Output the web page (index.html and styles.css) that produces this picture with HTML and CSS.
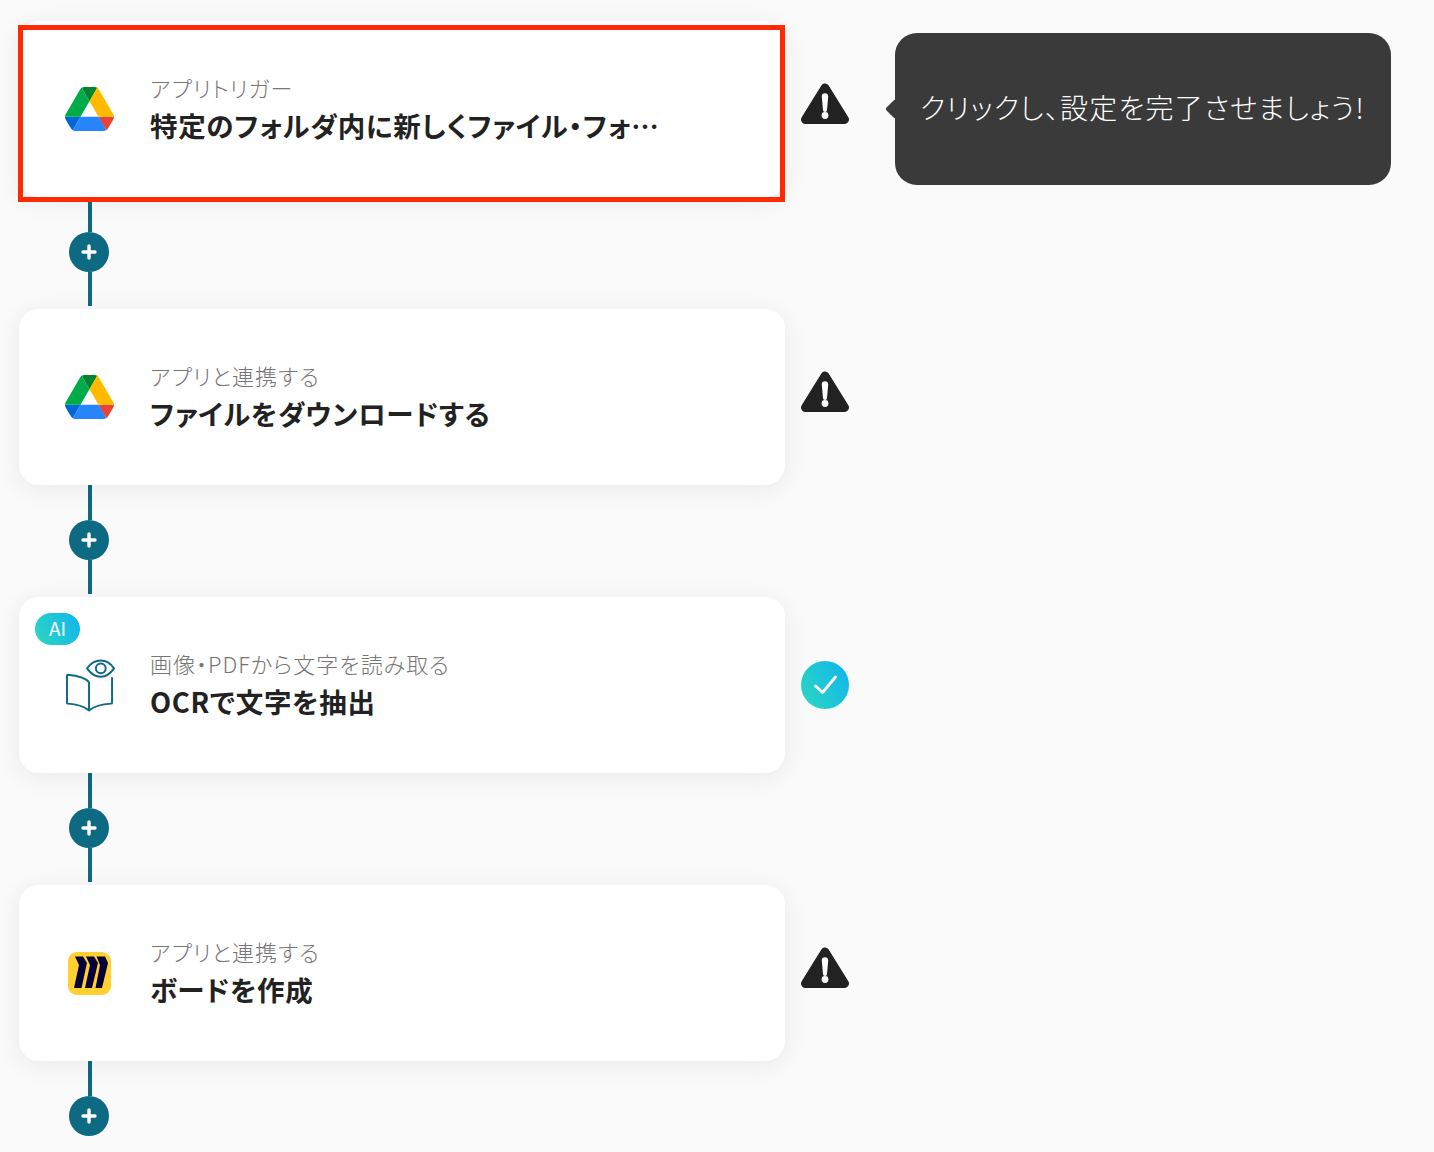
FILE: index.html
```html
<!DOCTYPE html>
<html lang="ja">
  <head>
    <title>フロー</title>
    <link rel="stylesheet" href="styles.css">
  </head>
  <body>
    <div class="flow">

      <div class="step">
        <div class="card">
          <div class="selected-frame"></div>
          <svg class="icon icon-drive" viewBox="0 0 87.3 78">
            <path d="m6.6 66.85 3.85 6.65c.8 1.4 1.95 2.5 3.3 3.3l13.75-23.8h-27.5c0 1.55.4 3.1 1.2 4.5z" fill="#0066da"/>
            <path d="m43.65 25-13.75-23.8c-1.35.8-2.5 1.9-3.3 3.3l-25.4 44a9.06 9.06 0 0 0 -1.2 4.5h27.5z" fill="#00ac47"/>
            <path d="m73.55 76.8c1.35-.8 2.5-1.9 3.3-3.3l1.6-2.75 7.65-13.25c.8-1.4 1.2-2.95 1.2-4.5h-27.502l5.852 11.5z" fill="#ea4335"/>
            <path d="m43.65 25 13.75-23.8c-1.35-.8-2.9-1.2-4.5-1.2h-18.5c-1.6 0-3.15.45-4.5 1.2z" fill="#00832d"/>
            <path d="m59.8 53h-32.3l-13.75 23.8c1.35.8 2.9 1.2 4.5 1.2h50.8c1.6 0 3.15-.45 4.5-1.2z" fill="#2684fc"/>
            <path d="m73.4 26.5-12.7-22c-.8-1.4-1.95-2.5-3.3-3.3l-13.75 23.8 16.15 28h27.45c0-1.55-.4-3.1-1.2-4.5z" fill="#ffba00"/>
          </svg>
          <div class="card-text">
            <div class="card-label">アプリトリガー</div>
            <div class="card-title">特定のフォルダ内に新しくファイル・フォルダが作成されたら</div>
          </div>
        </div>
        <svg class="warning" viewBox="0 0 48 44">
          <path class="warning-bg" d="M24 6 43.500 37.500H4.500Z"/>
          <path class="warning-mark" d="M20.800 14.500a3.200 3.200 0 0 1 6.400 0l-1.200 13.500a2 2 0 0 1-4 0Z"/>
          <circle class="warning-mark" cx="24" cy="33.500" r="3.400"/>
        </svg>
        <div class="tooltip">クリックし、設定を完了させましょう!</div>
      </div>

      <div class="connector">
        <div class="line"></div>
        <div class="add"><svg viewBox="0 0 16 16"><path d="M8 2v12M2 8h12"/></svg></div>
        <div class="line"></div>
      </div>

      <div class="step">
        <div class="card">
          <svg class="icon icon-drive" viewBox="0 0 87.3 78">
            <path d="m6.6 66.85 3.85 6.65c.8 1.4 1.95 2.5 3.3 3.3l13.75-23.8h-27.5c0 1.55.4 3.1 1.2 4.5z" fill="#0066da"/>
            <path d="m43.65 25-13.75-23.8c-1.35.8-2.5 1.9-3.3 3.3l-25.4 44a9.06 9.06 0 0 0 -1.2 4.5h27.5z" fill="#00ac47"/>
            <path d="m73.55 76.8c1.35-.8 2.5-1.9 3.3-3.3l1.6-2.75 7.65-13.25c.8-1.4 1.2-2.95 1.2-4.5h-27.502l5.852 11.5z" fill="#ea4335"/>
            <path d="m43.65 25 13.75-23.8c-1.35-.8-2.9-1.2-4.5-1.2h-18.5c-1.6 0-3.15.45-4.5 1.2z" fill="#00832d"/>
            <path d="m59.8 53h-32.3l-13.75 23.8c1.35.8 2.9 1.2 4.5 1.2h50.8c1.6 0 3.15-.45 4.5-1.2z" fill="#2684fc"/>
            <path d="m73.4 26.5-12.7-22c-.8-1.4-1.95-2.5-3.3-3.3l-13.75 23.8 16.15 28h27.45c0-1.55-.4-3.1-1.2-4.5z" fill="#ffba00"/>
          </svg>
          <div class="card-text">
            <div class="card-label">アプリと連携する</div>
            <div class="card-title">ファイルをダウンロードする</div>
          </div>
        </div>
        <svg class="warning" viewBox="0 0 48 44">
          <path class="warning-bg" d="M24 6 43.500 37.500H4.500Z"/>
          <path class="warning-mark" d="M20.800 14.500a3.200 3.200 0 0 1 6.400 0l-1.200 13.500a2 2 0 0 1-4 0Z"/>
          <circle class="warning-mark" cx="24" cy="33.500" r="3.400"/>
        </svg>
      </div>

      <div class="connector">
        <div class="line"></div>
        <div class="add"><svg viewBox="0 0 16 16"><path d="M8 2v12M2 8h12"/></svg></div>
        <div class="line"></div>
      </div>

      <div class="step">
        <div class="card">
          <div class="ai-badge">AI</div>
          <svg class="icon icon-book" viewBox="0 0 50 54">
            <path d="M23.500 24C20 20 12 17.500 2 16.500a1 1 0 0 0-1 1V45a1 1 0 0 0 1 1C10 46.500 18 48.500 23.500 53 29 48.500 38 46.500 46 46a1 1 0 0 0 1-1V19M23.500 24V53"/>
            <path d="M21.500 10C25 5 30 2 35.500 2S45.500 5 49 10C45.500 15 41 18.500 35.500 18.500S25 15 21.500 10Z"/>
            <circle cx="35.500" cy="10" r="5"/>
          </svg>
          <div class="card-text">
            <div class="card-label">画像・PDFから文字を読み取る</div>
            <div class="card-title">OCRで文字を抽出</div>
          </div>
        </div>
        <div class="done"><svg viewBox="0 0 24 24"><path d="M2.500 13l7 6.500L22.500 4"/></svg></div>
      </div>

      <div class="connector">
        <div class="line"></div>
        <div class="add"><svg viewBox="0 0 16 16"><path d="M8 2v12M2 8h12"/></svg></div>
        <div class="line"></div>
      </div>

      <div class="step">
        <div class="card">
          <svg class="icon icon-miro" viewBox="0 0 43 43">
            <rect width="43" height="43" rx="9" fill="#ffd02f"/>
            <path d="M7 4.500h8l4 6.500-5.500 25H6l5-23Z" fill="#050038"/>
            <path d="M18 4.500h8l4 6.500-6 25h-7l5-23Z" fill="#050038"/>
            <path d="M28.500 4.500H37l3 6.500-6 25h-6.500l4.500-23Z" fill="#050038"/>
          </svg>
          <div class="card-text">
            <div class="card-label">アプリと連携する</div>
            <div class="card-title">ボードを作成</div>
          </div>
        </div>
        <svg class="warning" viewBox="0 0 48 44">
          <path class="warning-bg" d="M24 6 43.500 37.500H4.500Z"/>
          <path class="warning-mark" d="M20.800 14.500a3.200 3.200 0 0 1 6.400 0l-1.200 13.500a2 2 0 0 1-4 0Z"/>
          <circle class="warning-mark" cx="24" cy="33.500" r="3.400"/>
        </svg>
      </div>

      <div class="connector connector-last">
        <div class="line"></div>
        <div class="add"><svg viewBox="0 0 16 16"><path d="M8 2v12M2 8h12"/></svg></div>
      </div>

    </div>
  </body>
</html>
```

FILE: styles.css
```css
html,
body {
  margin: 0;
  height: 100%;
  overflow: hidden;
  background: #fafafa;
}
body {
  font-family: "Noto Sans CJK JP", "Noto Sans", sans-serif;
  font-feature-settings: "palt";
  color: #222;
}
.flow {
  display: flex;
  flex-direction: column;
  padding: 21px 0 0 19px;
}
.step {
  display: flex;
  align-items: center;
  gap: 16px;
}
.card {
  position: relative;
  display: flex;
  align-items: center;
  gap: 36px;
  box-sizing: border-box;
  width: 766px;
  height: 176px;
  padding-left: 46px;
  background: #fff;
  border-radius: 20px;
  box-shadow: 0 4px 24px rgba(0, 0, 0, 0.07);
}
.selected-frame {
  position: absolute;
  top: 4px;
  left: -1px;
  right: 0;
  bottom: -5px;
  border: 5px solid #ff2a00;
}
.icon {
  flex: none;
  width: 49px;
  height: 44px;
}
.icon-book {
  height: 54px;
  margin: 0 -1px 0 1px;
  fill: none;
  stroke: #0d6a82;
  stroke-width: 2;
  stroke-linejoin: round;
}
.icon-miro {
  width: 43px;
  height: 43px;
  margin: 0 3px;
}
.card-text {
  width: 512px;
  margin-bottom: 6px;
}
.card-label {
  margin-top: 2px;
  font-size: 22px;
  line-height: 32px;
  font-weight: 300;
  letter-spacing: 1px;
  color: #757575;
}
.card-title {
  margin-top: 3px;
  font-size: 27.5px;
  line-height: 38px;
  font-weight: 700;
  letter-spacing: 0.7px;
  white-space: nowrap;
  overflow: hidden;
  text-overflow: ellipsis;
}
.ai-badge {
  position: absolute;
  top: 16px;
  left: 16px;
  width: 45px;
  height: 32px;
  border-radius: 16px;
  background: linear-gradient(60deg, #2dd8bd, #0fb4f0);
  color: #fff;
  font-size: 19px;
  line-height: 30px;
  text-align: center;
}
.warning {
  flex: none;
  width: 48px;
  height: 44px;
  margin-bottom: 10px;
}
.warning-bg {
  fill: #222;
  stroke: #222;
  stroke-width: 9;
  stroke-linejoin: round;
}
.warning-mark {
  fill: #fff;
}
.done {
  flex: none;
  display: flex;
  align-items: center;
  justify-content: center;
  width: 48px;
  height: 48px;
  border-radius: 50%;
  background: linear-gradient(60deg, #2dd8bd, #0fb4f0);
}
.done svg {
  width: 24px;
  height: 24px;
  fill: none;
  stroke: #fff;
  stroke-width: 2.8;
  stroke-linecap: round;
  stroke-linejoin: round;
}
.tooltip {
  position: relative;
  flex: none;
  box-sizing: border-box;
  width: 496px;
  height: 152px;
  margin-left: 30px;
  padding: 0 0 4px 25px;
  display: flex;
  align-items: center;
  background: #3a3a3a;
  border-radius: 22px;
  color: #fff;
  font-size: 28px;
  font-weight: 300;
  letter-spacing: 1.2px;
  white-space: nowrap;
}
.tooltip::before {
  content: "";
  position: absolute;
  left: -7px;
  top: 69px;
  width: 14px;
  height: 14px;
  background: #3a3a3a;
  transform: rotate(45deg);
  border-radius: 2px;
}
.connector {
  display: flex;
  flex-direction: column;
  width: 40px;
  height: 109px;
  margin: 0 0 3px 50px;
}
.connector-last {
  height: 75px;
}
.line {
  flex: 1;
  width: 4px;
  margin-left: 19px;
  background: #0d6a82;
}
.add {
  flex: none;
  display: flex;
  align-items: center;
  justify-content: center;
  width: 40px;
  height: 40px;
  border-radius: 50%;
  background: #0d6a82;
}
.add svg {
  width: 16px;
  height: 16px;
  fill: none;
  stroke: #fff;
  stroke-width: 3.4;
  stroke-linecap: round;
}
```
